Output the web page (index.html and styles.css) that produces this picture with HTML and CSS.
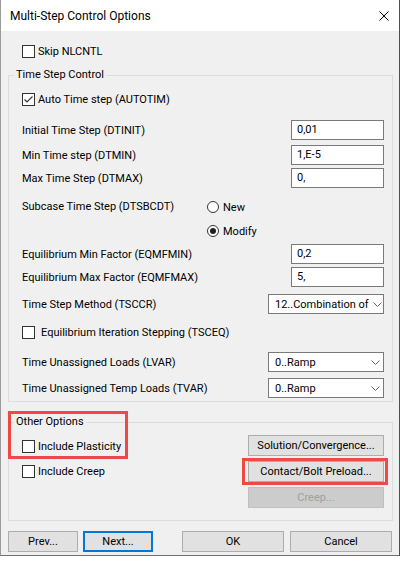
FILE: index.html
```html
<!DOCTYPE html>
<html lang="en">
  <head>
    <meta charset="UTF-8" />
    <meta name="viewport" content="width=device-width, initial-scale=1.0" />
    <title>Multi-Step Control Options</title>
    <link rel="stylesheet" href="styles.css">
  </head>
  <body>
    <div class="window">
      <div class="titlebar">
        <span class="title">Multi-Step Control Options</span>
        <span class="close">
          <svg width="10" height="10" viewBox="0 0 10 10">
            <path d="M0.5 0.5 L9.5 9.5 M9.5 0.5 L0.5 9.5" stroke="#000" stroke-width="1" />
          </svg>
        </span>
      </div>

      <div class="dialog-body">
        <div class="check skip-row"><span class="box"></span>Skip NLCNTL</div>

        <!-- time step control -->
        <fieldset class="group">
          <legend>Time Step Control</legend>

          <div class="row check auto-row">
            <span class="box">
              <svg width="11" height="11" viewBox="0 0 11 11">
                <path d="M1.5 5.5 L4 8 L9.5 2.5" fill="none" stroke="#333" stroke-width="1.1" />
              </svg>
            </span>
            Auto Time step (AUTOTIM)
          </div>

          <div class="row mt-11"><span>Initial Time Step (DTINIT)</span><span class="input">0,01</span></div>
          <div class="row mt-5"><span>Min Time step (DTMIN)</span><span class="input">1,E-5</span></div>
          <div class="row mt-3"><span>Max Time Step (DTMAX)</span><span class="input">0,</span></div>

          <div class="subcase">
            <span class="subcase-label">Subcase Time Step (DTSBCDT)</span>
            <div class="radios">
              <div class="radio-option"><span class="radio"></span>New</div>
              <div class="radio-option"><span class="radio selected"></span>Modify</div>
            </div>
          </div>

          <div class="row mt-3"><span>Equilibrium Min Factor (EQMFMIN)</span><span class="input">0,2</span></div>
          <div class="row mt-3"><span>Equilibrium Max Factor (EQMFMAX)</span><span class="input">5,</span></div>

          <div class="row mt-7">
            <span>Time Step Method (TSCCR)</span>
            <div class="select">
              <span class="select-text">12..Combination of</span>
              <svg class="chevron" width="9" height="5" viewBox="0 0 9 5">
                <path d="M0.5 0.5 L4.5 4.5 L8.5 0.5" fill="none" stroke="#606060" stroke-width="1" />
              </svg>
            </div>
          </div>

          <div class="row check wide-gap mt-8"><span class="box"></span>Equilibrium Iteration Stepping (TSCEQ)</div>

          <div class="row mt-10">
            <span>Time Unassigned Loads (LVAR)</span>
            <div class="select">
              <span class="select-text">0..Ramp</span>
              <svg class="chevron" width="9" height="5" viewBox="0 0 9 5">
                <path d="M0.5 0.5 L4.5 4.5 L8.5 0.5" fill="none" stroke="#606060" stroke-width="1" />
              </svg>
            </div>
          </div>
          <div class="row mt-6">
            <span>Time Unassigned Temp Loads (TVAR)</span>
            <div class="select">
              <span class="select-text">0..Ramp</span>
              <svg class="chevron" width="9" height="5" viewBox="0 0 9 5">
                <path d="M0.5 0.5 L4.5 4.5 L8.5 0.5" fill="none" stroke="#606060" stroke-width="1" />
              </svg>
            </div>
          </div>
        </fieldset>

        <!-- other options -->
        <fieldset class="group other-group">
          <legend>Other Options</legend>
          <div class="other-grid">
            <div class="other-checks">
              <div class="check"><span class="box"></span>Include Plasticity</div>
              <div class="check"><span class="box"></span>Include Creep</div>
            </div>
            <div class="other-buttons">
              <button class="btn wide">Solution/Convergence...</button>
              <button class="btn wide">Contact/Bolt Preload...</button>
              <button class="btn wide" disabled>Creep...</button>
            </div>
          </div>
        </fieldset>

        <div class="footer">
          <div class="footer-left">
            <button class="btn small">Prev...</button>
            <button class="btn small default">Next...</button>
          </div>
          <div class="footer-right">
            <button class="btn large">OK</button>
            <button class="btn large">Cancel</button>
          </div>
        </div>
      </div>

      <span class="highlight hl-plasticity"></span>
      <span class="highlight hl-contact"></span>
    </div>
  </body>
</html>
```

FILE: styles.css
```css
body {
  margin: 0;
  background: #fff;
  font-family: Roboto, "Noto Sans", Arial, sans-serif;
  font-size: 11px;
  color: #000;
}

.window {
  position: relative;
  width: 400px;
  height: 556px;
  box-sizing: border-box;
  background: #f0f0f0;
  border-left: 1px solid #9a9a9a;
  border-right: 1px solid #4f4f4f;
  border-bottom: 1px solid #6f6f6f;
}

/* title bar */
.titlebar {
  height: 31px;
  background: #fff;
  display: flex;
  align-items: center;
  justify-content: space-between;
  padding: 0 10px 0 9px;
}

.title {
  font-size: 12px;
}

.close {
  display: flex;
  margin-top: 1px;
}

.dialog-body {
  padding-top: 10px;
}

/* checkboxes */
.check {
  display: flex;
  align-items: center;
  height: 20px;
  gap: 3px;
}

.skip-row {
  margin-left: 21px;
}

.box {
  width: 13px;
  height: 13px;
  box-sizing: border-box;
  border: 1px solid #333;
  background: #fff;
  display: flex;
  align-items: center;
  justify-content: center;
}

.check.wide-gap {
  justify-content: flex-start;
  gap: 6px;
}

/* group boxes */
.group {
  margin: 7px 6px 0 7px;
  padding: 0 8px 3px 5px;
  border: 1px solid #dcdcdc;
  min-width: 0;
}

.group legend {
  padding: 0 2px;
  line-height: 14px;
}

.row {
  display: flex;
  align-items: center;
  justify-content: space-between;
  height: 20px;
  padding-left: 8px;
}

.auto-row {
  justify-content: flex-start;
  margin-top: 7px;
}

.mt-3 { margin-top: 3px; }
.mt-5 { margin-top: 5px; }
.mt-6 { margin-top: 6px; }
.mt-7 { margin-top: 7px; }
.mt-8 { margin-top: 8px; }
.mt-10 { margin-top: 10px; }
.mt-11 { margin-top: 11px; }

.input {
  width: 93px;
  height: 20px;
  box-sizing: border-box;
  border: 1px solid #7a7a7a;
  background: #fff;
  padding-left: 5px;
  line-height: 18px;
}

.select {
  width: 116px;
  height: 20px;
  box-sizing: border-box;
  border: 1px solid #7a7a7a;
  background: #fff;
  padding: 0 3px 0 6px;
  display: flex;
  align-items: center;
  gap: 4px;
}

.select-text {
  flex: 1;
  white-space: nowrap;
}

.chevron {
  flex-shrink: 0;
}

/* radios */
.subcase {
  display: grid;
  grid-template-columns: 185px auto;
  padding-left: 8px;
  margin-top: 9px;
}

.subcase-label {
  height: 20px;
  line-height: 20px;
}

.radios {
  display: flex;
  flex-direction: column;
  gap: 4px;
}

.radio-option {
  display: flex;
  align-items: center;
  height: 20px;
  gap: 4px;
}

.radio {
  width: 12px;
  height: 12px;
  box-sizing: border-box;
  border: 1px solid #333;
  border-radius: 50%;
  background: #fff;
  display: flex;
  align-items: center;
  justify-content: center;
}

.radio.selected::after {
  content: "";
  width: 6px;
  height: 6px;
  border-radius: 50%;
  background: #222;
}

/* other options */
.other-group {
  margin-top: 13px;
  padding-top: 6px;
  padding-bottom: 12px;
}

.other-grid {
  display: flex;
  justify-content: space-between;
  padding-left: 8px;
}

.other-checks {
  display: flex;
  flex-direction: column;
  gap: 5px;
  margin-top: 1px;
}

.other-buttons {
  display: flex;
  flex-direction: column;
  gap: 5px;
}

/* buttons */
.btn {
  height: 21px;
  box-sizing: border-box;
  border: 1px solid #adadad;
  background: #e1e1e1;
  font-family: inherit;
  font-size: 11px;
  color: #000;
  padding: 0;
}

.btn.wide { width: 136px; }
.btn.small { width: 70px; }
.btn.large { width: 102px; }

.btn.default {
  border: 2px solid #0078d7;
}

.btn:disabled {
  background: #cccccc;
  border-color: #bfbfbf;
  color: #a0a0a0;
}

.footer {
  display: flex;
  justify-content: space-between;
  margin-top: 10px;
  padding: 0 7px;
}

.footer-left {
  display: flex;
  gap: 5px;
}

.footer-right {
  display: flex;
  gap: 6px;
}

/* red annotation boxes */
.highlight {
  position: absolute;
  box-sizing: border-box;
  border: 3px solid #f04848;
}

.hl-plasticity {
  left: 7px;
  top: 411px;
  width: 120px;
  height: 48px;
}

.hl-contact {
  left: 241px;
  top: 458px;
  width: 146px;
  height: 27px;
}
```
